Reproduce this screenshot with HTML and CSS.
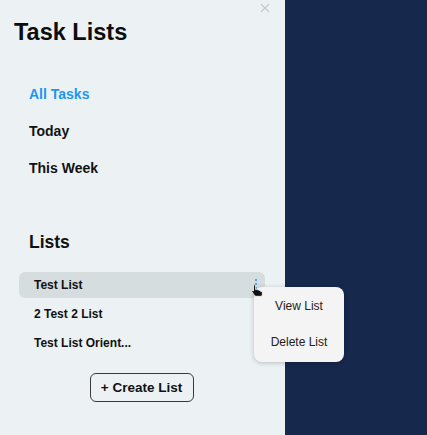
FILE: index.html
```html
<!DOCTYPE html>
<html>
<head>
<meta charset="utf-8">
<link rel="stylesheet" href="styles.css">
</head>
<body>
<div class="app">
  <aside class="sidebar">
    <button class="close" aria-label="Close">
      <svg width="10" height="10" viewBox="0 0 10 10"><path d="M1 1L9 9M9 1L1 9" stroke="#c9cccd" stroke-width="1.3" fill="none"/></svg>
    </button>
    <h1 class="title">Task Lists</h1>
    <nav class="nav">
      <a class="nav-item active">All Tasks</a>
      <a class="nav-item">Today</a>
      <a class="nav-item">This Week</a>
    </nav>
    <h2 class="lists-heading">Lists</h2>
    <ul class="lists">
      <li class="list-item selected">
        <span>Test List</span>
        <span class="kebab"><i></i><i></i><i></i></span>
      </li>
      <li class="list-item"><span>2 Test 2 List</span></li>
      <li class="list-item"><span>Test List Orient...</span></li>
    </ul>
    <div class="create-wrap">
      <button class="create">+ Create List</button>
    </div>
    <div class="menu">
      <div class="menu-item">View List</div>
      <div class="menu-item">Delete List</div>
    </div>
    <svg class="cursor" width="12" height="13" viewBox="0 0 12 13">
      <path d="M3.5 0.8 C4.3 0.8 4.6 1.3 4.6 2 L4.6 5.6 L5.2 5.3 C5.9 5.1 6.4 5.4 6.6 5.9 C7.3 5.6 8 5.9 8.2 6.5 C8.9 6.3 9.7 6.7 9.8 7.5 L10.5 7.4 C11 7.5 11.3 8 11.3 8.6 L11.3 10.5 C11.3 11.4 10.7 12.3 9.8 12.3 L5 12.3 C4.1 12.3 3.4 11.6 3 10.9 L0.9 7.6 C0.5 6.9 1.3 6.1 2 6.6 L2.5 7.1 L2.5 2 C2.5 1.3 2.8 0.8 3.5 0.8 Z" fill="#111" stroke="#fff" stroke-width="0.8"/>
    </svg>
  </aside>
  <main class="main"></main>
</div>
</body>
</html>
```

FILE: styles.css
```css
* { box-sizing: border-box; }
html, body { margin: 0; padding: 0; }
body {
  font-family: "Liberation Sans", Arial, sans-serif;
  color: #111;
  width: 427px;
  height: 435px;
  overflow: hidden;
}
.app {
  display: flex;
  height: 435px;
}
.sidebar {
  position: relative;
  width: 285px;
  flex: none;
  background: #ecf2f4;
  padding: 18px 20px 0 14px;
}
.main {
  flex: 1;
  background: #17284d;
}
.close {
  position: absolute;
  top: 3px;
  left: 260px;
  border: 0;
  background: transparent;
  padding: 0;
  width: 10px;
  height: 10px;
}
.close svg { display: block; }
.title {
  margin: 0;
  font-size: 23.5px;
  line-height: 28px;
  font-weight: 700;
  color: #0d0d0d;
}
.nav {
  display: flex;
  flex-direction: column;
  gap: 20.5px;
  margin-top: 40px;
  padding-left: 15px;
}
.nav-item {
  font-size: 14px;
  line-height: 16.5px;
  font-weight: 700;
  color: #111;
}
.nav-item.active { color: #2196f0; }
.lists-heading {
  margin: 55px 0 0 15px;
  font-size: 17.5px;
  line-height: 20px;
  font-weight: 700;
  color: #111;
}
.lists {
  list-style: none;
  margin: 20px 0 0 5px;
  padding: 0;
  display: flex;
  flex-direction: column;
  gap: 3px;
  width: 246px;
}
.list-item {
  display: flex;
  align-items: center;
  justify-content: space-between;
  height: 26px;
  padding: 0 8px 0 15px;
  border-radius: 6px;
  font-size: 12px;
  font-weight: 700;
  color: #111;
}
.list-item.selected { background: #d6dddf; }
.kebab {
  display: flex;
  flex-direction: column;
  gap: 2px;
  margin-top: -1px;
}
.kebab i {
  display: block;
  width: 2px;
  height: 2px;
  border-radius: 1px;
  background: #2a8de6;
}
.create-wrap {
  display: flex;
  justify-content: center;
  margin-top: 17px;
  padding-left: 4px;
}
.create {
  font-family: "Liberation Sans", Arial, sans-serif;
  font-size: 13.5px;
  font-weight: 700;
  color: #111;
  background: transparent;
  border: 1px solid #3a3a3a;
  border-radius: 6px;
  height: 29px;
  width: 104px;
  padding: 0;
}
.menu {
  position: absolute;
  left: 254px;
  top: 287px;
  width: 90px;
  height: 75px;
  background: #f4f4f4;
  border-radius: 8px;
  box-shadow: 0 1px 5px rgba(0,0,0,0.22);
  display: flex;
  flex-direction: column;
  padding-top: 11px;
  gap: 19px;
}
.menu-item {
  text-align: center;
  font-size: 12px;
  line-height: 17px;
  color: #222;
}
.cursor {
  position: absolute;
  left: 251px;
  top: 284px;
}
```
